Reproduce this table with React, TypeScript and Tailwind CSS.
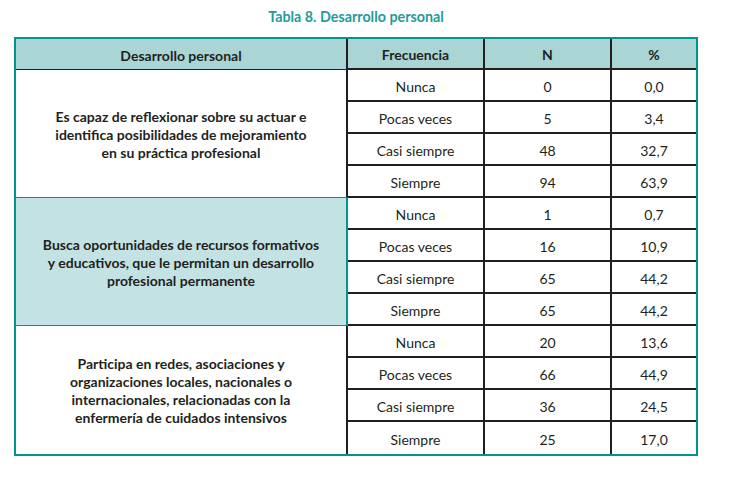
const groups = [
  {
    lines: ['Es capaz de reflexionar sobre su actuar e', 'identifica posibilidades de mejoramiento', 'en su práctica profesional'],
    rows: [
      ['Nunca', '0', '0,0'],
      ['Pocas veces', '5', '3,4'],
      ['Casi siempre', '48', '32,7'],
      ['Siempre', '94', '63,9'],
    ],
    shaded: false,
  },
  {
    lines: ['Busca oportunidades de recursos formativos', 'y educativos, que le permitan un desarrollo', 'profesional permanente'],
    rows: [
      ['Nunca', '1', '0,7'],
      ['Pocas veces', '16', '10,9'],
      ['Casi siempre', '65', '44,2'],
      ['Siempre', '65', '44,2'],
    ],
    shaded: true,
  },
  {
    lines: ['Participa en redes, asociaciones y', 'organizaciones locales, nacionales o', 'internacionales, relacionadas con la', 'enfermería de cuidados intensivos'],
    rows: [
      ['Nunca', '20', '13,6'],
      ['Pocas veces', '66', '44,9'],
      ['Casi siempre', '36', '24,5'],
      ['Siempre', '25', '17,0'],
    ],
    shaded: false,
  },
];

export default function App() {
  return (
    <div className="w-[750px] h-[485px] bg-white text-[#231f20] font-['Lato',_'Liberation_Sans',_sans-serif]">
      {/* Title */}
      <div className="h-[37px] w-[684px] ml-[14px] flex items-center justify-center pb-[4px]">
        <h1 className="text-[14.3px] font-bold text-[#1f9c9a]">Tabla 8. Desarrollo personal</h1>
      </div>

      {/* Table */}
      <div className="w-[684px] ml-[14px] border-2 border-[#00958f]">
        <div className="grid grid-cols-[332px_137px_127px_84px] grid-rows-[31px_repeat(12,32px)] text-[14px]">
          <div className="bg-[#a9d5d5] border-r-2 border-r-[#231f20] border-b border-b-[#231f20] flex items-center justify-center font-bold pt-[2px]">
            Desarrollo personal
          </div>
          <div className="bg-[#a9d5d5] border-r-2 border-b-2 border-[#231f20] flex items-center justify-center font-bold pt-[2px]">
            Frecuencia
          </div>
          <div className="bg-[#a9d5d5] border-r-2 border-b-2 border-[#231f20] flex items-center justify-center font-bold pt-[2px]">
            N
          </div>
          <div className="bg-[#a9d5d5] border-b-2 border-[#231f20] flex items-center justify-center font-bold pt-[2px]">
            %
          </div>

          {groups.map((g, gi) => (
            <>
              <div
                key={`g${gi}`}
                className={
                  g.shaded
                    ? 'row-span-4 bg-[#c3e2e3] border-r-2 border-r-[#00958f] border-b border-b-[#00958f] flex items-center justify-center text-center font-bold leading-[18px] pt-[2px]'
                    : gi === groups.length - 1
                      ? 'row-span-4 bg-white border-r-2 border-r-[#231f20] flex items-center justify-center text-center font-bold leading-[18px] pt-[2px]'
                      : 'row-span-4 bg-white border-r-2 border-r-[#231f20] border-b border-b-[#00958f] flex items-center justify-center text-center font-bold leading-[18px] pt-[2px]'
                }
              >
                <p>
                  {g.lines.map((l, li) => (
                    <span key={li} className="block">
                      {l}
                    </span>
                  ))}
                </p>
              </div>
              {g.rows.map((r, ri) => {
                const last = gi === groups.length - 1 && ri === g.rows.length - 1;
                return (
                  <>
                    <div
                      key={`f${gi}${ri}`}
                      className={
                        last
                          ? 'border-r-2 border-[#231f20] flex items-center justify-center pt-[2px]'
                          : 'border-r-2 border-b-2 border-[#231f20] flex items-center justify-center pt-[2px]'
                      }
                    >
                      {r[0]}
                    </div>
                    <div
                      key={`n${gi}${ri}`}
                      className={
                        last
                          ? 'border-r-2 border-[#231f20] flex items-center justify-center pt-[2px]'
                          : 'border-r-2 border-b-2 border-[#231f20] flex items-center justify-center pt-[2px]'
                      }
                    >
                      {r[1]}
                    </div>
                    <div
                      key={`p${gi}${ri}`}
                      className={
                        last
                          ? 'flex items-center justify-center pt-[2px]'
                          : 'border-b-2 border-[#231f20] flex items-center justify-center pt-[2px]'
                      }
                    >
                      {r[2]}
                    </div>
                  </>
                );
              })}
            </>
          ))}
        </div>
      </div>
    </div>
  );
}
